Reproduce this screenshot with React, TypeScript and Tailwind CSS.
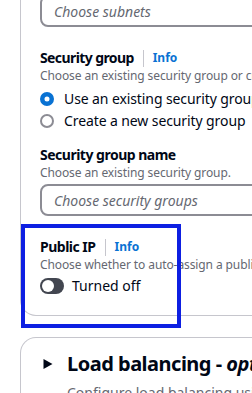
import React from "react";

function InfoLink() {
  return (
    <span className="ml-[9px] flex items-center">
      <span className="h-[17px] w-px bg-[#c6c6cd]" />
      <span className="ml-[9px] text-[12px] leading-[16px] font-bold text-[#0972d3]">Info</span>
    </span>
  );
}

function Radio({ checked, label }: { checked: boolean; label: string }) {
  return (
    <div className="flex h-[20px] items-center whitespace-nowrap">
      <svg width="14" height="14" viewBox="0 0 14 14" className="shrink-0">
        {checked ? (
          <circle cx="7" cy="7" r="4.75" fill="#ffffff" stroke="#0972d3" strokeWidth="4.5" />
        ) : (
          <circle cx="7" cy="7" r="6" fill="#ffffff" stroke="#8c8c94" strokeWidth="2" />
        )}
      </svg>
      <span className="ml-[10px] text-[14px] leading-[20px] tracking-[-0.1px] text-[#000716]">{label}</span>
    </div>
  );
}

export default function App() {
  return (
    <div
      className="relative h-[393px] w-[252px] overflow-hidden bg-white"
      style={{ fontFamily: '"Noto Sans", "Open Sans", sans-serif' }}
    >
      <div className="flex flex-col">
        {/* Network settings card (continued) */}
        <div className="ml-[20px] flex w-[440px] flex-col rounded-b-[16px] border-x border-b border-[#c6c6cd] pl-[19px] pb-[19px]">
          <div className="-mt-[5px] flex h-[32px] w-[380px] items-center rounded-[8px] border-2 border-[#8c8c94] pl-[12px]">
            <span className="text-[14px] italic text-[#656871]">Choose subnets</span>
          </div>

          <div className="mt-[21px] flex h-[20px] items-center whitespace-nowrap">
            <span className="text-[14px] leading-[20px] font-bold tracking-[-0.6px] text-[#000716]">Security group</span>
            <InfoLink />
          </div>
          <div className="whitespace-nowrap text-[12px] leading-[16px] tracking-[-0.1px] text-[#656871]">
            Choose an existing security group or create a new one.
          </div>
          <div className="mt-[5px] flex flex-col gap-[2px]">
            <Radio checked label="Use an existing security group" />
            <Radio checked={false} label="Create a new security group" />
          </div>

          <div className="mt-[14px] flex h-[20px] items-center whitespace-nowrap">
            <span className="text-[14px] leading-[20px] font-bold tracking-[-0.5px] text-[#000716]">Security group name</span>
          </div>
          <div className="whitespace-nowrap text-[12px] leading-[16px] tracking-[-0.1px] text-[#656871]">
            Choose an existing security group.
          </div>
          <div className="mt-[3px] flex h-[32px] w-[380px] items-center rounded-[8px] border-2 border-[#8c8c94] pl-[12px]">
            <span className="text-[14px] italic text-[#656871]">Choose security groups</span>
          </div>

          <div className="mt-[21px] flex h-[20px] items-center whitespace-nowrap">
            <span className="text-[14px] leading-[20px] font-bold tracking-[-0.5px] text-[#000716]">Public IP</span>
            <InfoLink />
          </div>
          <div className="whitespace-nowrap text-[12px] leading-[16px] tracking-[-0.1px] text-[#656871]">
            Choose whether to auto-assign a public IP address.
          </div>
          <div className="mt-[3px] flex h-[20px] items-center whitespace-nowrap">
            <span className="relative h-[16px] w-[24px] shrink-0 rounded-full bg-[#424650]">
              <span className="absolute left-[2px] top-[2px] h-[12px] w-[12px] rounded-full bg-white" />
            </span>
            <span className="ml-[8px] text-[14px] leading-[20px] text-[#000716]">Turned off</span>
          </div>
        </div>

        {/* Load balancing card */}
        <div className="mt-[21px] ml-[20px] flex w-[440px] flex-col rounded-t-[16px] border-x border-t border-[#c6c6cd] pl-[19px] pt-[14px] pb-[20px]">
          <div className="flex h-[24px] items-center whitespace-nowrap">
            <svg width="16" height="16" viewBox="0 0 16 16" className="shrink-0">
              <polygon points="3.5,3 12.5,8 3.5,13" fill="#000716" />
            </svg>
            <span className="ml-[11px] text-[20px] leading-[24px] font-bold tracking-[-0.5px] text-[#000716]">
              Load balancing - <i>optional</i>
            </span>
          </div>
          <div className="mt-[7px] whitespace-nowrap pl-[27px] text-[14px] leading-[20px] text-[#656871]">
            Configure load balancing using an Elastic Load Balancer.
          </div>
        </div>
      </div>

      {/* Highlight annotation */}
      <div className="pointer-events-none absolute left-[21px] top-[224px] h-[104px] w-[160px] border-4 border-[#0d1fe2]" />
    </div>
  );
}
